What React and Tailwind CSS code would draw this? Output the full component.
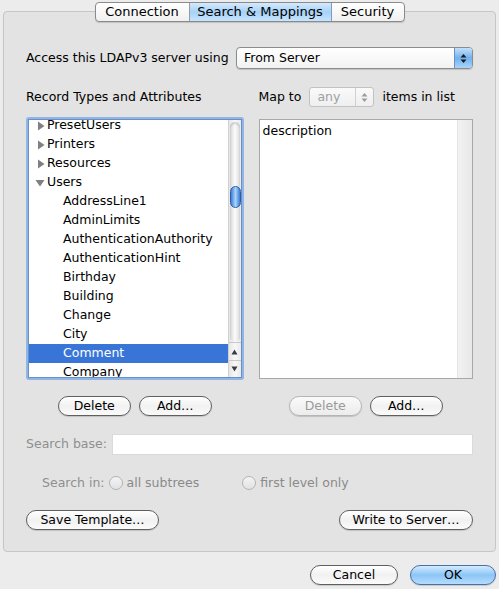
const font = { fontFamily: '"DejaVu Sans", "Liberation Sans", sans-serif' };

function AquaButton({ children, width, disabled, blue }) {
  const base =
    'flex h-[20px] items-center justify-center whitespace-nowrap rounded-full border text-[12.5px] leading-none shadow-[0_1px_1px_rgba(0,0,0,0.15)]';
  const tone = blue
    ? 'border-[#4a6fa3] bg-linear-to-b from-[#d3ebff] via-[#8cc5f5] to-[#b4ddff] text-black'
    : disabled
      ? 'border-[#b5b5b5] bg-linear-to-b from-[#fafafa] to-[#ececec] text-[#9a9a9a]'
      : 'border-[#5f5f5f] bg-linear-to-b from-[#ffffff] via-[#f1f1f1] to-[#fbfbfb] text-black';
  return (
    <div className={`${base} ${tone}`} style={{ width }}>
      {children}
    </div>
  );
}

function Arrows({ dim }) {
  return (
    <svg width="7" height="11" viewBox="0 0 7 11">
      <path d="M3.5 1 L6.5 4.5 L0.5 4.5 Z" fill={dim ? '#9c9c9c' : '#1a1a1a'} />
      <path d="M3.5 10 L6.5 6.5 L0.5 6.5 Z" fill={dim ? '#9c9c9c' : '#1a1a1a'} />
    </svg>
  );
}

function Radio({ label }) {
  return (
    <div className="flex items-center gap-[4px] text-[#8a8a8a]">
      <div className="h-[14px] w-[14px] rounded-full border border-[#b3b3b3] bg-linear-to-b from-[#f4f4f4] to-[#e2e2e2]" />
      <span>{label}</span>
    </div>
  );
}

const rows = [
  { t: 'PresetUsers', kind: 'closed' },
  { t: 'Printers', kind: 'closed' },
  { t: 'Resources', kind: 'closed' },
  { t: 'Users', kind: 'open' },
  { t: 'AddressLine1' },
  { t: 'AdminLimits' },
  { t: 'AuthenticationAuthority' },
  { t: 'AuthenticationHint' },
  { t: 'Birthday' },
  { t: 'Building' },
  { t: 'Change' },
  { t: 'City' },
  { t: 'Comment', sel: true },
  { t: 'Company' },
];

function TreeRow({ row }) {
  const isParent = !!row.kind;
  return (
    <div
      className={`flex h-[19px] items-center whitespace-nowrap ${row.sel ? 'bg-[#3875d7] text-white' : 'text-black'}`}
    >
      {isParent ? (
        <div className="flex w-[18px] justify-end pr-[2px]">
          {row.kind === 'closed' ? (
            <svg width="8" height="10" viewBox="0 0 8 10">
              <path d="M1 0.5 L7.5 5 L1 9.5 Z" fill="#808080" />
            </svg>
          ) : (
            <svg width="10" height="8" viewBox="0 0 10 8">
              <path d="M0.5 1 L9.5 1 L5 7.5 Z" fill="#808080" />
            </svg>
          )}
        </div>
      ) : (
        <div className="w-[34px]" />
      )}
      <span>{row.t}</span>
    </div>
  );
}

export default function App() {
  return (
    <div className="h-[589px] w-[499px] overflow-hidden bg-[#ececec] text-[12.5px] text-black" style={font}>
      {/* tabs */}
      <div className="relative z-10 flex justify-center pt-[2px]">
        <div className="flex h-[20px] overflow-hidden rounded-[4px] border border-[#8a8a8a] bg-linear-to-b from-[#ffffff] to-[#f0f0f0] text-[13px] shadow-[0_1px_1px_rgba(0,0,0,0.15)]">
          <div className="flex w-[94px] items-center justify-center border-r border-[#9a9a9a]">Connection</div>
          <div className="flex w-[142px] items-center justify-center border-r border-[#7a9cc8] bg-linear-to-b from-[#d4eafc] via-[#a6d1f7] to-[#c8e5fd]">
            Search &amp; Mappings
          </div>
          <div className="flex w-[72px] items-center justify-center">Security</div>
        </div>
      </div>

      {/* tab box */}
      <div className="mx-[3px] -mt-[11px] h-[541px] rounded-[4px] border border-[#c6c6c6] bg-[#e3e3e3] px-[22px]">
        <div className="mt-[34px] flex h-[24px] items-center">
          <span className="whitespace-nowrap">Access this LDAPv3 server using</span>
          <div className="ml-auto flex h-[22px] w-[237px] items-center overflow-hidden rounded-[4px] border border-[#8c8c8c] bg-linear-to-b from-[#ffffff] to-[#f2f2f2] shadow-[0_1px_1px_rgba(0,0,0,0.15)]">
            <span className="flex-1 pl-[7px]">From Server</span>
            <div className="flex h-full w-[18px] items-center justify-center border-l border-[#6f8fbf] bg-linear-to-b from-[#c5e1fb] via-[#6fb1ef] to-[#a9d4fb]">
              <Arrows />
            </div>
          </div>
        </div>

        <div className="mt-[17px] flex gap-[15px]">
          {/* left column */}
          <div className="w-[218px]">
            <div className="flex h-[20px] items-center">Record Types and Attributes</div>
            <div className="mt-[10px] h-[263px] rounded-[3px] bg-[#8fb6e6] p-[2px]">
              <div className="flex h-full border border-[#6b8fc4] bg-white">
                <div className="flex-1 overflow-hidden">
                  <div className="-mt-[4px]">
                    {rows.map(r => (
                      <TreeRow key={r.t} row={r} />
                    ))}
                  </div>
                </div>
                {/* scrollbar */}
                <div className="flex w-[13px] flex-col border-l border-[#d0d0d0] bg-linear-to-r from-[#e6e6e6] via-[#f8f8f8] to-[#e9e9e9]">
                  <div className="relative mx-[1px] mt-[2px] flex-1 rounded-t-full rounded-b-full bg-linear-to-r from-[#d8d8d8] via-[#fbfbfb] to-[#dcdcdc] shadow-[inset_0_2px_2px_rgba(0,0,0,0.15)]">
                    <div className="absolute left-0 top-[64px] h-[22px] w-[11px] rounded-full border border-[#2a5fa8] bg-linear-to-r from-[#3c7fd6] via-[#a9d3fb] to-[#3a7bd2]" />
                  </div>
                  <div className="flex h-[18px] items-center justify-center border-t border-[#c8c8c8]">
                    <svg width="7" height="6" viewBox="0 0 7 6">
                      <path d="M3.5 0.5 L6.5 5.5 L0.5 5.5 Z" fill="#3c3c3c" />
                    </svg>
                  </div>
                  <div className="flex h-[17px] items-center justify-center border-t border-[#c8c8c8]">
                    <svg width="7" height="6" viewBox="0 0 7 6">
                      <path d="M0.5 0.5 L6.5 0.5 L3.5 5.5 Z" fill="#3c3c3c" />
                    </svg>
                  </div>
                </div>
              </div>
            </div>
            <div className="mt-[16px] flex justify-center gap-[8px]">
              <AquaButton width={73}>Delete</AquaButton>
              <AquaButton width={73}>Add…</AquaButton>
            </div>
          </div>

          {/* right column */}
          <div className="w-[215px]">
            <div className="flex h-[20px] items-center whitespace-nowrap">
              <span>Map to</span>
              <div className="ml-[8px] flex h-[20px] w-[65px] items-center rounded-[3px] border border-[#c2c2c2] bg-linear-to-b from-[#fafafa] to-[#efefef] text-[#a0a0a0]">
                <span className="flex-1 pl-[7px]">any</span>
                <div className="flex h-full w-[18px] items-center justify-center border-l border-[#d0d0d0]">
                  <Arrows dim />
                </div>
              </div>
              <span className="ml-[8px]">items in list</span>
            </div>
            <div className="mt-[12px] flex h-[260px] border border-[#a8a8a8] bg-white">
              <div className="flex-1 px-[3px] pt-[2px]">
                <div className="flex h-[19px] items-center">description</div>
              </div>
              <div className="w-[15px] border-l border-[#e6e6e6] bg-linear-to-r from-[#f2f2f2] to-[#e8e8e8]" />
            </div>
            <div className="mt-[17px] flex justify-center gap-[8px]">
              <AquaButton width={73} disabled>
                Delete
              </AquaButton>
              <AquaButton width={73}>Add…</AquaButton>
            </div>
          </div>
        </div>

        <div className="mt-[17px] flex h-[22px] items-center">
          <span className="text-[#8f8f8f]">Search base:</span>
          <div className="ml-auto h-[21px] w-[361px] border border-[#dadada] bg-white" />
        </div>

        <div className="mt-[20px] flex h-[16px] items-center">
          <span className="ml-[16px] mr-[4px] text-[#8f8f8f]">Search in:</span>
          <Radio label="all subtrees" />
          <div className="ml-[43px]">
            <Radio label="first level only" />
          </div>
        </div>

        <div className="mt-[19px] flex justify-between">
          <AquaButton width={133}>Save Template…</AquaButton>
          <AquaButton width={134}>Write to Server…</AquaButton>
        </div>
      </div>

      <div className="mt-[13px] flex justify-end gap-[12px] pr-[3px]">
        <AquaButton width={88}>Cancel</AquaButton>
        <AquaButton width={86} blue>
          OK
        </AquaButton>
      </div>
    </div>
  );
}
